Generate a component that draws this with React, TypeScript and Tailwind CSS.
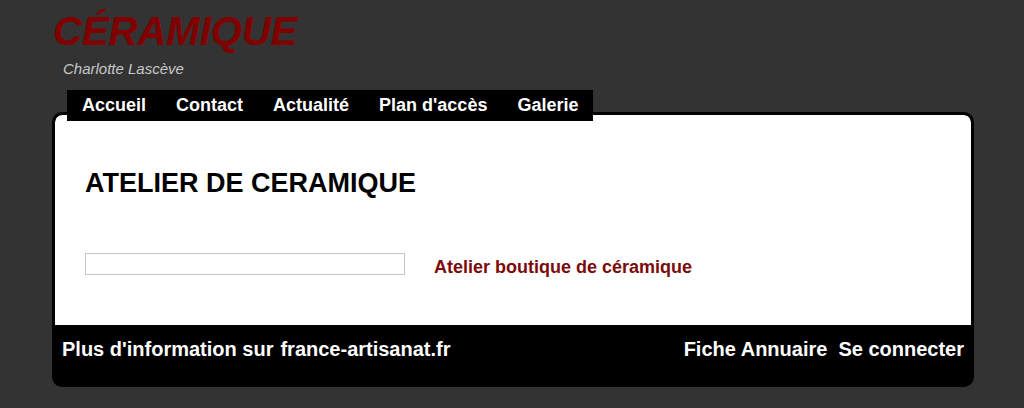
import React from "react";

export default function App() {
  const nav = ["Accueil", "Contact", "Actualité", "Plan d'accès", "Galerie"];
  return (
    <div
      className="min-h-[408px] w-full bg-[#333333] pb-[21px]"
      style={{ fontFamily: '"Liberation Sans", Arial, sans-serif' }}
    >
      <div className="pl-[52px] pr-[50px]">
        <div className="pt-[8px] pl-[1px] text-[40px] leading-[46px] font-bold italic text-[#800000]">
          CÉRAMIQUE
        </div>
        <div className="mt-[6px] pl-[11px] text-[15px] leading-[18px] italic text-[#c8c8c8]">
          Charlotte Lascève
        </div>
        <nav className="relative z-10 mt-[12px] ml-[15px] flex h-[31px] w-[526px] bg-black">
          {nav.map((n) => (
            <a
              key={n}
              className="px-[15px] text-[18px] leading-[31px] font-bold text-white whitespace-nowrap"
            >
              {n}
            </a>
          ))}
        </nav>
        <div className="-mt-[9px] w-[922px] overflow-hidden rounded-[10px] border-[3px] border-black bg-black">
          <div className="rounded-t-[7px] bg-white px-[30px] pt-[53px] h-[210px]">
            <h1 className="text-[27px] leading-[30px] font-bold text-black">
              ATELIER DE CERAMIQUE
            </h1>
            <div className="mt-[55px] flex items-start">
              <div className="h-[22px] w-[320px] border border-[#c4c4c4] bg-white" />
              <a className="ml-[29px] mt-[4px] text-[18px] leading-[21px] font-bold text-[#7b0a0a]">
                Atelier boutique de céramique
              </a>
            </div>
          </div>
          <div className="flex h-[59px] items-start justify-between px-[7px] pt-[13px] text-[20px] leading-[23px] font-bold text-white">
            <div className="flex gap-[7px]">
              <span>Plus d'information sur</span>
              <a>france-artisanat.fr</a>
            </div>
            <div className="flex gap-[11px]">
              <a>Fiche Annuaire</a>
              <a>Se connecter</a>
            </div>
          </div>
        </div>
      </div>
    </div>
  );
}
